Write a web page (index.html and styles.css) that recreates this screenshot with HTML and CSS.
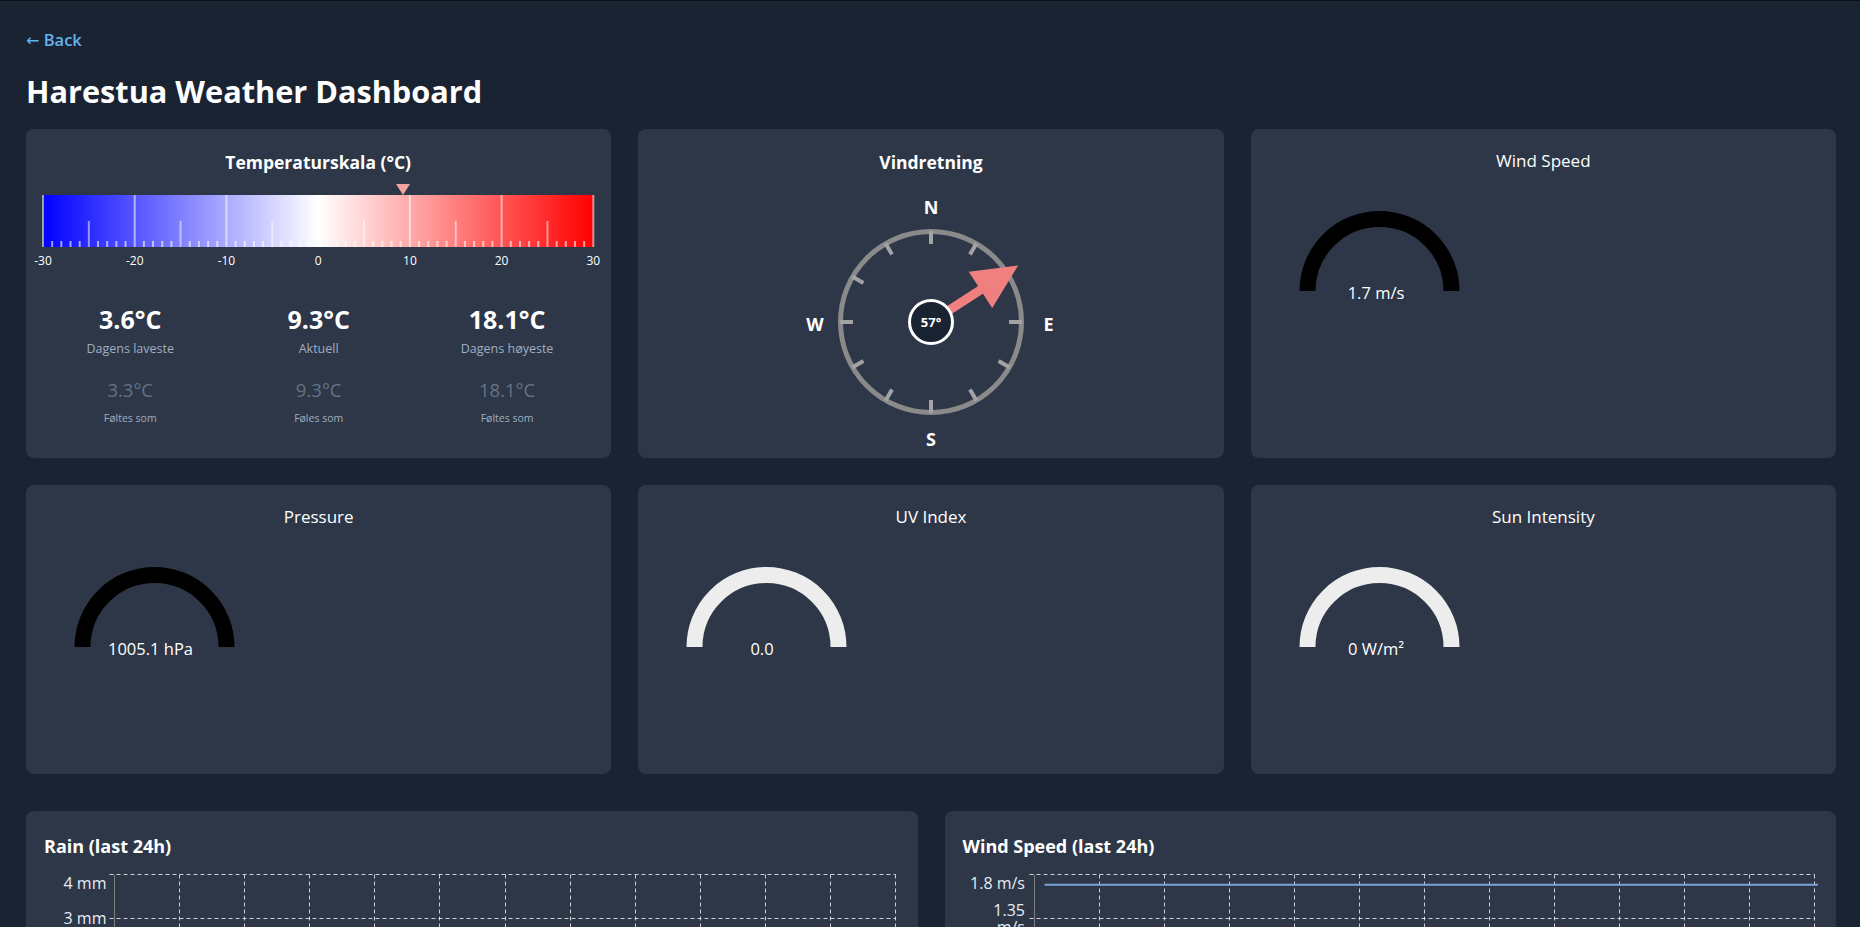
FILE: index.html
```html
<!DOCTYPE html>
<html lang="no">
<head>
<meta charset="utf-8">
<title>Harestua Weather Dashboard</title>
<link rel="stylesheet" href="styles.css">
</head>
<body>
<div class="page">
  <a class="back" href="#"><span class="back-arrow">←</span> Back</a>
  <h1 class="page-title">Harestua Weather Dashboard</h1>

  <div class="grid3">
    <section class="card temp-card">
      <h2 class="card-title">Temperaturskala (°C)</h2>
      <div class="scale">
        <div class="scale-track">
          <span class="scale-marker" style="left:65.5%"></span>
          <div class="scale-bar">
            <svg class="scale-ticks" viewBox="0 0 600 52" preserveAspectRatio="none">
              <path class="tick tick-minor" d="M10 46V52M20 46V52M30 46V52M40 46V52M60 46V52M70 46V52M80 46V52M90 46V52M110 46V52M120 46V52M130 46V52M140 46V52M160 46V52M170 46V52M180 46V52M190 46V52M210 46V52M220 46V52M230 46V52M240 46V52M260 46V52M270 46V52M280 46V52M290 46V52M310 46V52M320 46V52M330 46V52M340 46V52M360 46V52M370 46V52M380 46V52M390 46V52M410 46V52M420 46V52M430 46V52M440 46V52M460 46V52M470 46V52M480 46V52M490 46V52M510 46V52M520 46V52M530 46V52M540 46V52M560 46V52M570 46V52M580 46V52M590 46V52"/>
              <path class="tick tick-mid" d="M50 26V52M150 26V52M250 26V52M350 26V52M450 26V52M550 26V52"/>
              <path class="tick tick-major" d="M0 0V52M100 0V52M200 0V52M300 0V52M400 0V52M500 0V52M600 0V52"/>
            </svg>
          </div>
        </div>
        <div class="scale-labels">
          <span><b>-30</b></span><span><b>-20</b></span><span><b>-10</b></span><span><b>0</b></span><span><b>10</b></span><span><b>20</b></span><span><b>30</b></span>
        </div>
      </div>
      <div class="stats">
        <div class="stat">
          <div class="stat-value">3.6°C</div>
          <div class="stat-label">Dagens laveste</div>
          <div class="stat-feels">3.3°C</div>
          <div class="stat-feels-label">Føltes som</div>
        </div>
        <div class="stat">
          <div class="stat-value">9.3°C</div>
          <div class="stat-label">Aktuell</div>
          <div class="stat-feels">9.3°C</div>
          <div class="stat-feels-label">Føles som</div>
        </div>
        <div class="stat">
          <div class="stat-value">18.1°C</div>
          <div class="stat-label">Dagens høyeste</div>
          <div class="stat-feels">18.1°C</div>
          <div class="stat-feels-label">Føltes som</div>
        </div>
      </div>
    </section>

    <section class="card compass-card">
      <h2 class="card-title">Vindretning</h2>
      <svg class="compass" width="260" height="260" viewBox="0 0 260 260">
        <circle class="compass-ring" cx="130" cy="130" r="90.5"/>
        <g class="compass-ticks">
          <line x1="130" y1="39" x2="130" y2="52"/>
          <line x1="130" y1="39" x2="130" y2="52" transform="rotate(30 130 130)"/>
          <line x1="130" y1="39" x2="130" y2="52" transform="rotate(60 130 130)"/>
          <line x1="130" y1="39" x2="130" y2="52" transform="rotate(90 130 130)"/>
          <line x1="130" y1="39" x2="130" y2="52" transform="rotate(120 130 130)"/>
          <line x1="130" y1="39" x2="130" y2="52" transform="rotate(150 130 130)"/>
          <line x1="130" y1="39" x2="130" y2="52" transform="rotate(180 130 130)"/>
          <line x1="130" y1="39" x2="130" y2="52" transform="rotate(210 130 130)"/>
          <line x1="130" y1="39" x2="130" y2="52" transform="rotate(240 130 130)"/>
          <line x1="130" y1="39" x2="130" y2="52" transform="rotate(270 130 130)"/>
          <line x1="130" y1="39" x2="130" y2="52" transform="rotate(300 130 130)"/>
          <line x1="130" y1="39" x2="130" y2="52" transform="rotate(330 130 130)"/>
        </g>
        <text class="compass-dir" x="130" y="15">N</text>
        <text class="compass-dir" x="247.5" y="132">E</text>
        <text class="compass-dir" x="130" y="247">S</text>
        <text class="compass-dir" x="14" y="132">W</text>
        <g class="compass-arrow" transform="rotate(57 130 130)">
          <line x1="130" y1="110" x2="130" y2="68"/>
          <polygon points="130,26 108.5,71 151.5,71"/>
        </g>
        <circle class="compass-hub" cx="130" cy="130" r="21.5"/>
        <text class="compass-deg" x="130" y="130">57°</text>
      </svg>
    </section>

    <section class="card gauge-card">
      <h2 class="gauge-title">Wind Speed</h2>
      <svg class="gauge" width="230" height="110" viewBox="0 0 230 110">
        <path class="gauge-arc arc-dark" d="M40.5 88A72 72 0 0 1 184.5 88"/>
        <text class="gauge-value" x="109" y="89.5">1.7 m/s</text>
      </svg>
    </section>

    <section class="card gauge-card">
      <h2 class="gauge-title">Pressure</h2>
      <svg class="gauge" width="230" height="110" viewBox="0 0 230 110">
        <path class="gauge-arc arc-dark" d="M40.5 88A72 72 0 0 1 184.5 88"/>
        <text class="gauge-value" x="108.5" y="89.5">1005.1 hPa</text>
      </svg>
    </section>

    <section class="card gauge-card">
      <h2 class="gauge-title">UV Index</h2>
      <svg class="gauge" width="230" height="110" viewBox="0 0 230 110">
        <path class="gauge-arc arc-light" d="M40.5 88A72 72 0 0 1 184.5 88"/>
        <text class="gauge-value" x="108" y="89.5">0.0</text>
      </svg>
    </section>

    <section class="card gauge-card">
      <h2 class="gauge-title">Sun Intensity</h2>
      <svg class="gauge" width="230" height="110" viewBox="0 0 230 110">
        <path class="gauge-arc arc-light" d="M40.5 88A72 72 0 0 1 184.5 88"/>
        <text class="gauge-value" x="109" y="89.5">0 W/m²</text>
      </svg>
    </section>
  </div>

  <div class="grid2">
    <section class="card chart-card">
      <h2 class="chart-title">Rain (last 24h)</h2>
      <svg class="chart" width="855" height="240" viewBox="0 0 855 240">
        <g class="grid-line">
          <line x1="65.5" y1="7.5" x2="851.5" y2="7.5"/>
          <line x1="65.5" y1="51.5" x2="851.5" y2="51.5"/>
          <line x1="65.5" y1="95.5" x2="851.5" y2="95.5"/>
          <line x1="65.5" y1="139.5" x2="851.5" y2="139.5"/>
          <line x1="135.5" y1="7.5" x2="135.5" y2="188.5"/>
          <line x1="200.5" y1="7.5" x2="200.5" y2="188.5"/>
          <line x1="265.5" y1="7.5" x2="265.5" y2="188.5"/>
          <line x1="330.5" y1="7.5" x2="330.5" y2="188.5"/>
          <line x1="395.5" y1="7.5" x2="395.5" y2="188.5"/>
          <line x1="461.5" y1="7.5" x2="461.5" y2="188.5"/>
          <line x1="526.5" y1="7.5" x2="526.5" y2="188.5"/>
          <line x1="591.5" y1="7.5" x2="591.5" y2="188.5"/>
          <line x1="656.5" y1="7.5" x2="656.5" y2="188.5"/>
          <line x1="721.5" y1="7.5" x2="721.5" y2="188.5"/>
          <line x1="786.5" y1="7.5" x2="786.5" y2="188.5"/>
          <line x1="851.5" y1="7.5" x2="851.5" y2="188.5"/>
        </g>
        <line class="chart-axis" x1="70.5" y1="7.5" x2="70.5" y2="183.5"/>
        <line class="chart-axis" x1="65.5" y1="183.5" x2="851.5" y2="183.5"/>
        <text class="chart-label" x="62.5" y="15.7">4 mm</text>
        <text class="chart-label" x="62.5" y="51.2">3 mm</text>
      </svg>
    </section>

    <section class="card chart-card">
      <h2 class="chart-title">Wind Speed (last 24h)</h2>
      <svg class="chart" width="855" height="240" viewBox="0 0 855 240">
        <g class="grid-line">
          <line x1="66.5" y1="7.5" x2="851.5" y2="7.5"/>
          <line x1="66.5" y1="51.5" x2="851.5" y2="51.5"/>
          <line x1="66.5" y1="95.5" x2="851.5" y2="95.5"/>
          <line x1="66.5" y1="139.5" x2="851.5" y2="139.5"/>
          <line x1="136.5" y1="7.5" x2="136.5" y2="188.5"/>
          <line x1="201.5" y1="7.5" x2="201.5" y2="188.5"/>
          <line x1="266.5" y1="7.5" x2="266.5" y2="188.5"/>
          <line x1="331.5" y1="7.5" x2="331.5" y2="188.5"/>
          <line x1="396.5" y1="7.5" x2="396.5" y2="188.5"/>
          <line x1="461.5" y1="7.5" x2="461.5" y2="188.5"/>
          <line x1="526.5" y1="7.5" x2="526.5" y2="188.5"/>
          <line x1="591.5" y1="7.5" x2="591.5" y2="188.5"/>
          <line x1="656.5" y1="7.5" x2="656.5" y2="188.5"/>
          <line x1="721.5" y1="7.5" x2="721.5" y2="188.5"/>
          <line x1="786.5" y1="7.5" x2="786.5" y2="188.5"/>
          <line x1="851.5" y1="7.5" x2="851.5" y2="188.5"/>
        </g>
        <line class="chart-axis" x1="71.5" y1="7.5" x2="71.5" y2="183.5"/>
        <line class="chart-axis" x1="66.5" y1="183.5" x2="851.5" y2="183.5"/>
        <line class="chart-series" x1="81.5" y1="17.7" x2="855" y2="17.7"/>
        <text class="chart-label" x="62" y="16">1.8 m/s</text>
        <text class="chart-label"><tspan x="62" y="43">1.35</tspan><tspan x="62" y="60">m/s</tspan></text>
      </svg>
    </section>
  </div>
</div>
</body>
</html>
```

FILE: styles.css
```css
* {
  box-sizing: border-box;
}

html,
body {
  margin: 0;
}

body {
  background: #1a2332;
  border-top: 1px solid #0b0f16;
  font-family: "Open Sans", "Noto Sans", sans-serif;
  color: #ffffff;
}

.page {
  padding: 27px 24px 40px 26px;
}

.back {
  display: block;
  height: 24px;
  line-height: 24px;
  font-size: 16.5px;
  font-weight: 600;
  color: #63b3ed;
  text-decoration: none;
}

.back-arrow {
  font-family: "DejaVu Sans", sans-serif;
  font-weight: 400;
  font-size: 16px;
}

.page-title {
  margin: 19px 0 18px;
  font-size: 30.7px;
  line-height: 40px;
  font-weight: 700;
}

.grid3 {
  display: grid;
  grid-template-columns: repeat(3, 1fr);
  grid-template-rows: 329px 289px;
  gap: 27px;
}

.grid2 {
  display: grid;
  grid-template-columns: repeat(2, 1fr);
  gap: 27px;
  margin-top: 37px;
}

.card {
  background: #2d3748;
  border-radius: 8px;
  min-width: 0;
}

/* Temperature card */
.temp-card {
  padding: 21px 18px 0 17px;
}

.card-title {
  margin: 0;
  font-size: 17.5px;
  line-height: 24px;
  font-weight: 700;
  text-align: center;
}

.scale {
  margin-top: 10px;
}

.scale-track {
  position: relative;
  padding-top: 11px;
}

.scale-marker {
  position: absolute;
  top: 0;
  width: 0;
  height: 0;
  border-left: 7px solid transparent;
  border-right: 7px solid transparent;
  border-top: 11px solid #f4a3a3;
  transform: translateX(-50%);
}

.scale-bar {
  height: 52px;
  background: linear-gradient(to right, #0000ff, #ffffff 50%, #ff0000);
}

.scale-ticks {
  display: block;
  width: 100%;
  height: 52px;
  overflow: visible;
}

.tick {
  fill: none;
  stroke-width: 2px;
  vector-effect: non-scaling-stroke;
}

.tick-major {
  stroke: rgba(255, 255, 255, 0.55);
}

.tick-mid {
  stroke: rgba(255, 255, 255, 0.5);
}

.tick-minor {
  stroke: rgba(255, 255, 255, 0.6);
}

.scale-labels {
  display: flex;
  justify-content: space-between;
  margin-top: 6px;
  height: 16px;
  font-size: 12px;
  line-height: 16px;
}

.scale-labels span {
  width: 0;
  display: flex;
  justify-content: center;
  white-space: nowrap;
}

.scale-labels b {
  font-weight: 400;
}

.stats {
  display: grid;
  grid-template-columns: repeat(3, 1fr);
  margin: 34px -8px 0 -7px;
  text-align: center;
}

.stat-value {
  font-size: 25px;
  line-height: 32px;
  font-weight: 700;
}

.stat-label {
  margin-top: 5px;
  font-size: 12.5px;
  line-height: 18px;
  color: #a0aec0;
}

.stat-feels {
  margin-top: 19px;
  font-size: 18.5px;
  line-height: 26px;
  color: #667286;
}

.stat-feels-label {
  margin-top: 8px;
  font-size: 10.5px;
  line-height: 14px;
  color: #a0aec0;
}

/* Compass card */
.compass-card {
  padding: 21px 16px 0;
  display: flex;
  flex-direction: column;
  align-items: center;
}

.compass {
  display: block;
  margin-top: 18px;
}

.compass-ring {
  fill: none;
  stroke: #8a8a8a;
  stroke-width: 5;
}

.compass-ticks line {
  stroke: #a3a3a3;
  stroke-width: 4;
}

.compass-dir {
  fill: #ffffff;
  font-size: 18px;
  font-weight: 700;
  text-anchor: middle;
  dominant-baseline: central;
}

.compass-arrow line {
  stroke: #f08080;
  stroke-width: 9;
}

.compass-arrow polygon {
  fill: #f08080;
}

.compass-hub {
  fill: #1a2332;
  stroke: #ffffff;
  stroke-width: 3;
}

.compass-deg {
  fill: #ffffff;
  font-size: 13px;
  font-weight: 700;
  text-anchor: middle;
  dominant-baseline: central;
}

/* Gauge cards */
.gauge-card {
  padding: 20px 16px 0;
}

.gauge-title {
  margin: 0;
  font-size: 17px;
  line-height: 24px;
  font-weight: 400;
  text-align: center;
}

.gauge {
  display: block;
  margin-top: 30px;
}

.gauge-arc {
  fill: none;
  stroke-width: 16;
}

.arc-dark {
  stroke: #000000;
}

.arc-light {
  stroke: #ededed;
}

.gauge-value {
  fill: #ffffff;
  font-size: 16.5px;
  text-anchor: middle;
  dominant-baseline: central;
}

/* Chart cards */
.chart-card {
  height: 360px;
  padding: 23px 18px 0;
  overflow: hidden;
}

.chart-title {
  margin: 0;
  font-size: 18px;
  line-height: 24px;
  font-weight: 700;
}

.chart {
  display: block;
  margin-top: 9px;
}

.grid-line line {
  stroke: rgba(255, 255, 255, 0.75);
  stroke-width: 1;
  stroke-dasharray: 4 3;
}

.chart-axis {
  stroke: #7f7f7f;
  stroke-width: 1;
}

.chart-series {
  stroke: #7aa2d6;
  stroke-width: 2;
}

.chart-label {
  fill: #e8edf3;
  font-size: 16px;
  text-anchor: end;
  dominant-baseline: central;
}
```
